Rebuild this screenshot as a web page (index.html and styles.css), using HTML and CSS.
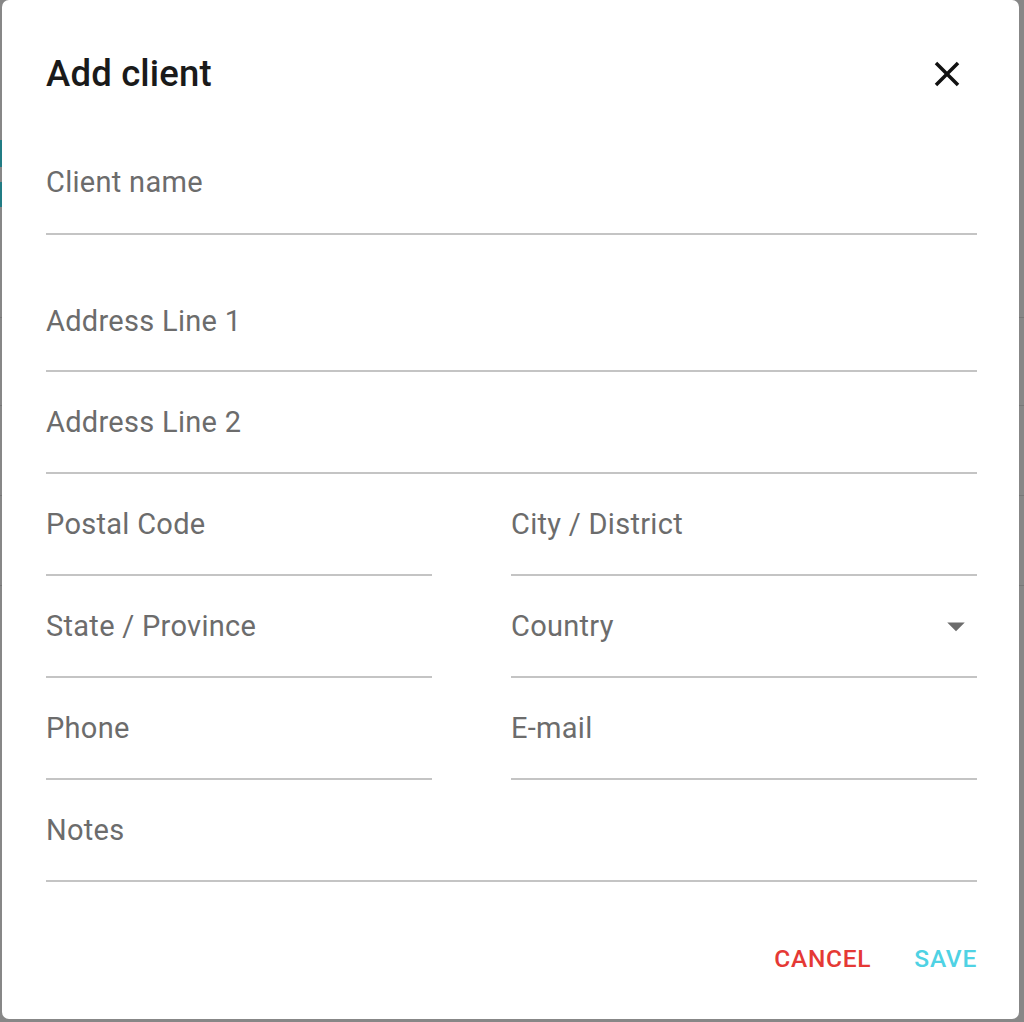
FILE: index.html
```html
<!DOCTYPE html>
<html lang="en">
<head>
<meta charset="utf-8">
<title>Add client</title>
<link rel="stylesheet" href="styles.css">
</head>
<body>
<div class="dialog">
  <div class="dialog-header">
    <h2 class="dialog-title">Add client</h2>
    <svg class="close-icon" viewBox="0 0 24 24" width="42" height="42" aria-label="Close"><path d="M19 6.41L17.59 5 12 10.59 6.41 5 5 6.41 10.59 12 5 17.59 6.41 19 12 13.41 17.59 19 19 17.59 13.41 12z"/></svg>
  </div>
  <div class="form">
    <div class="field field-first"><span class="label">Client name</span></div>
    <div class="field field-second"><span class="label">Address Line 1</span></div>
    <div class="field"><span class="label">Address Line 2</span></div>
    <div class="row">
      <div class="field"><span class="label">Postal Code</span></div>
      <div class="field"><span class="label">City / District</span></div>
    </div>
    <div class="row">
      <div class="field"><span class="label">State / Province</span></div>
      <div class="field select"><span class="label">Country</span><svg class="arrow-icon" viewBox="0 0 24 24" width="42" height="42"><path d="M7 10l5 5 5-5z"/></svg></div>
    </div>
    <div class="row">
      <div class="field"><span class="label">Phone</span></div>
      <div class="field"><span class="label">E-mail</span></div>
    </div>
    <div class="field"><span class="label">Notes</span></div>
  </div>
  <div class="actions">
    <span class="btn btn-cancel">CANCEL</span>
    <span class="btn btn-save">SAVE</span>
  </div>
</div>
</body>
</html>
```

FILE: styles.css
```css
html, body {
  margin: 0;
  padding: 0;
}
body {
  width: 1024px;
  height: 1022px;
  overflow: hidden;
  box-sizing: border-box;
  padding: 0 5px 3px 2px;
  font-family: Roboto, "Noto Sans", "Liberation Sans", sans-serif;
  background:
    linear-gradient(#217c84, #217c84) 0 140px / 2px 27px no-repeat,
    linear-gradient(#217c84, #217c84) 0 182px / 2px 25px no-repeat,
    linear-gradient(#777777, #777777) 0 317px / 2px 1px no-repeat,
    linear-gradient(#777777, #777777) 0 405px / 2px 1px no-repeat,
    linear-gradient(#777777, #777777) 0 495px / 2px 1px no-repeat,
    linear-gradient(#777777, #777777) 0 585px / 2px 1px no-repeat,
    linear-gradient(#777777, #777777) 1019px 317px / 5px 1px no-repeat,
    linear-gradient(#777777, #777777) 1019px 405px / 5px 1px no-repeat,
    linear-gradient(#777777, #777777) 1019px 495px / 5px 1px no-repeat,
    linear-gradient(#777777, #777777) 1019px 585px / 5px 1px no-repeat,
    #878787;
}
.dialog {
  background: #ffffff;
  border-radius: 7px;
  height: 1019px;
  box-sizing: border-box;
  padding: 52px 42px 0 44px;
}
.dialog-header {
  display: flex;
  align-items: center;
  justify-content: space-between;
  height: 42px;
}
.dialog-title {
  margin: 0;
  font-size: 36.5px;
  font-weight: 500;
  line-height: 42px;
  color: #1a1a1a;
  letter-spacing: 0.005em;
  padding-top: 2px;
}
.close-icon {
  display: block;
  fill: #111111;
  margin-right: 9px;
  margin-top: 2px;
}
.form {
  margin-top: 39px;
}
.field {
  display: flex;
  align-items: center;
  padding-top: 34px;
  padding-bottom: 33px;
  border-bottom: 2px solid #c4c4c4;
}
.field-first {
  padding-top: 33px;
  padding-bottom: 34px;
  margin-bottom: 36px;
}
.field-second {
  padding-top: 34px;
  padding-bottom: 32px;
}
.label {
  flex: 1;
  font-size: 29px;
  line-height: 33px;
  color: #6c6c6c;
  letter-spacing: 0.01em;
}
.row {
  display: grid;
  grid-template-columns: 386px 1fr;
  column-gap: 79px;
}
.arrow-icon {
  display: block;
  fill: #6c6c6c;
  margin: -5px 0 -4px 0;
}
.actions {
  display: flex;
  justify-content: flex-end;
  gap: 43px;
  margin-top: 56px;
}
.btn {
  font-size: 24.5px;
  font-weight: 500;
  line-height: 42px;
  letter-spacing: 0.03em;
}
.btn-cancel {
  color: #e53935;
}
.btn-save {
  color: #4fd2e4;
}
```
